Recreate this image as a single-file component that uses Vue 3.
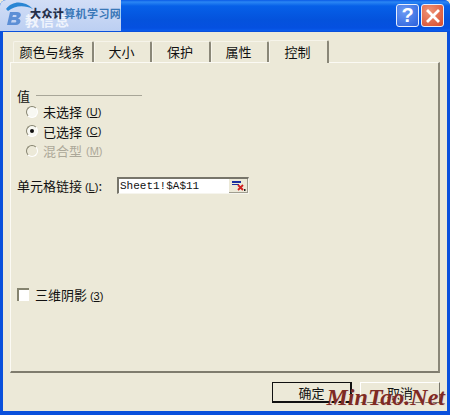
<script setup>
const tabs = [
  { label: '颜色与线条', width: 81 },
  { label: '大小', width: 58 },
  { label: '保护', width: 59 },
  { label: '属性', width: 58 },
  { label: '控制', width: 60, active: true }
];

const options = [
  { label: '未选择', key: 'U' },
  { label: '已选择', key: 'C', checked: true },
  { label: '混合型', key: 'M', disabled: true }
];
</script>

<template>
  <div class="window">
    <header class="titlebar">
      <div class="stamp">
        <svg class="stamp-logo" width="32" height="31" viewBox="0 0 32 31">
          <path d="M4 9 C10 1 22 0 31 9 C23 5 13 5 6 11 Z" fill="#2a86d4" />
          <path d="M8 12 L15 12 C20 12 20 17 16 18.500 C20 19 19 25 14 25 L5 25 Z M11 15 L10.400 17 L13.500 17 C15 17 15 15 13.500 15 Z M9.800 20 L9 22.500 L13 22.500 C14.800 22.500 14.800 20 13 20 Z" fill="#5c8fd6" fill-rule="evenodd" />
        </svg>
        <span class="stamp-ghost">教信息</span>
        <span class="stamp-text"><b>大众计</b><i>算机学习网</i></span>
      </div>
      <div class="caption-buttons">
        <button class="cap help">?</button>
        <button class="cap close">
          <svg width="16" height="16" viewBox="0 0 16 16">
            <path d="M3 3 L13 13 M13 3 L3 13" stroke="#fff" stroke-width="2.800" stroke-linecap="square" />
          </svg>
        </button>
      </div>
    </header>

    <div class="body">
      <div class="tabs">
        <div
          v-for="tab in tabs"
          :key="tab.label"
          class="tab"
          :class="{ active: tab.active }"
          :style="{ width: tab.width + 'px' }"
        >{{ tab.label }}</div>
      </div>

      <section class="panel">
        <div class="group-title">
          <span>值</span>
          <span class="rule"></span>
        </div>

        <div class="radios">
          <div v-for="opt in options" :key="opt.key" class="radio-row" :class="{ off: opt.disabled }">
            <span class="radio" :class="{ checked: opt.checked }"></span>
            <span>{{ opt.label }}</span>
            <span class="hot">(<u>{{ opt.key }}</u>)</span>
          </div>
        </div>

        <div class="link-row">
          <span class="link-label">单元格链接 <span class="hot">(<u>L</u>)</span>:</span>
          <div class="ref-field">
            <span class="ref-text">Sheet1!$A$11</span>
            <span class="ref-btn">
              <svg width="16" height="12" viewBox="0 0 16 12">
                <rect x="1" y="1" width="9" height="2" fill="#1a2fa0" />
                <rect x="1" y="4" width="7" height="1" fill="#1a2fa0" />
                <path d="M7 5 L12 10 M12 5 L7 10" stroke="#d02020" stroke-width="1.800" />
                <rect x="13" y="9" width="1.500" height="2" fill="#222" />
              </svg>
            </span>
          </div>
        </div>

        <label class="check-row">
          <span class="check"></span>
          <span>三维阴影 <span class="hot">(<u>3</u>)</span></span>
        </label>
      </section>

      <footer class="actions">
        <button class="btn primary">确定</button>
        <button class="btn">取消</button>
      </footer>
    </div>

    <div class="mark">MinTao.Net</div>
  </div>
</template>

<style>
html, body {
  margin: 0;
  background: #ece9d8;
}
</style>

<style scoped>
.window {
  position: relative;
  width: 450px;
  height: 415px;
  overflow: hidden;
  display: flex;
  flex-direction: column;
  box-sizing: border-box;
  background: #0a50dc;
  border-radius: 6px 6px 0 0;
  font-family: "Noto Sans CJK SC", "Liberation Sans", sans-serif;
  font-size: 13px;
  color: #111;
}

.titlebar {
  position: relative;
  height: 31px;
  flex: none;
  display: flex;
  align-items: center;
  justify-content: flex-end;
  padding-right: 6px;
  background: linear-gradient(#0a5ae6 0, #2a86f4 2px, #0660e8 6px, #0452dc 20px, #0550e0 28px, #0a5cec 31px);
}

.stamp {
  position: absolute;
  left: 0;
  top: 0;
  width: 121px;
  height: 31px;
  background: linear-gradient(#d2def6, #bccff2);
}

.stamp-logo {
  position: absolute;
  left: 2px;
  top: 0;
}

.stamp-ghost {
  position: absolute;
  left: 25px;
  top: 10px;
  font-size: 14px;
  font-weight: 700;
  letter-spacing: 1px;
  color: #f0f4fc;
}

.stamp-text {
  position: absolute;
  left: 30px;
  top: 4px;
  font-size: 11px;
  font-weight: 700;
  letter-spacing: 0.400px;
  line-height: 18px;
  white-space: nowrap;
}

.stamp-text b {
  color: #26304a;
}

.stamp-text i {
  font-style: normal;
  color: #3a78b8;
}

.caption-buttons {
  display: flex;
  gap: 2px;
}

.cap {
  width: 23px;
  height: 23px;
  padding: 0;
  display: flex;
  align-items: center;
  justify-content: center;
  border: 1px solid #e8eefc;
  border-radius: 3px;
  color: #fff;
  font-family: "Liberation Sans", sans-serif;
  font-size: 20px;
  font-weight: 700;
}

.help {
  background: radial-gradient(circle at 35% 30%, #6c9cf4, #2a5fdc);
}

.close {
  background: radial-gradient(circle at 35% 30%, #ee9478, #d8492a);
}

.body {
  flex: 1;
  margin: 1px 3px 4px 3px;
  padding: 8px 7px 0 7px;
  display: flex;
  flex-direction: column;
  background: #ece9d8;
}

.tabs {
  height: 22px;
  display: flex;
  align-items: flex-end;
  padding-left: 3px;
  position: relative;
  z-index: 1;
}

.tab {
  box-sizing: border-box;
  height: 21px;
  padding: 0 2px 1px 0;
  display: flex;
  align-items: center;
  justify-content: center;
  border-top: 1px solid #f6f4ea;
  border-left: 1px solid #f6f4ea;
  border-right: 2px solid #8a8778;
  border-radius: 2px 2px 0 0;
}

.tab.active {
  height: 23px;
  margin-bottom: -1px;
  background: #ece9d8;
}

.panel {
  box-sizing: border-box;
  height: 311px;
  padding: 23px 0 0 6px;
  display: flex;
  flex-direction: column;
  border-top: 1px solid #fbfaf4;
  border-left: 1px solid #fbfaf4;
  border-right: 2px solid #8a8778;
  border-bottom: 2px solid #7f7c6e;
}

.group-title {
  height: 18px;
  display: flex;
  align-items: center;
  gap: 6px;
}

.rule {
  width: 106px;
  height: 1px;
  background: #a8a698;
}

.radios {
  margin-top: -2px;
  display: flex;
  flex-direction: column;
  gap: 0.500px;
  padding-left: 9px;
}

.radio-row {
  height: 19px;
  display: flex;
  align-items: center;
  gap: 4px;
}

.radio-row.off {
  color: #aca899;
}

.radio {
  box-sizing: border-box;
  width: 12px;
  height: 12px;
  margin-right: 1px;
  display: flex;
  align-items: center;
  justify-content: center;
  border-radius: 50%;
  background: #f8f8f2;
  border: 1px solid;
  border-color: #85836f #fff #fff #85836f;
}

.radio.checked::after {
  content: "";
  width: 4px;
  height: 4px;
  border-radius: 50%;
  background: #111;
}

.off .radio {
  background: #ece9d8;
}

.hot {
  font-size: 11px;
  font-family: "Liberation Sans", sans-serif;
}

.link-row {
  margin-top: 17px;
  height: 17px;
  display: flex;
  align-items: center;
}

.link-label {
  width: 100px;
  white-space: nowrap;
}

.ref-field {
  box-sizing: border-box;
  width: 132px;
  height: 17px;
  display: flex;
  align-items: center;
  justify-content: space-between;
  background: #fff;
  border-top: 2px solid #77756a;
  border-left: 2px solid #77756a;
  border-bottom: 1px solid #f6f5ee;
  border-right: 1px solid #f6f5ee;
}

.ref-text {
  padding-left: 1px;
  font-family: "Liberation Mono", monospace;
  font-size: 11px;
  line-height: 14px;
}

.ref-btn {
  width: 19px;
  height: 14px;
  display: flex;
  align-items: center;
  justify-content: center;
  background: #ece9d8;
  box-shadow: inset -1px -1px 0 #a09e90;
}

.check-row {
  margin-top: 93px;
  height: 14px;
  display: flex;
  align-items: center;
  gap: 6px;
}

.check {
  box-sizing: border-box;
  width: 12px;
  height: 13px;
  background: #fff;
  border-top: 2px solid #85836f;
  border-left: 2px solid #85836f;
}

.actions {
  margin-top: 9px;
  display: flex;
  justify-content: flex-end;
  gap: 8px;
}

.btn {
  box-sizing: border-box;
  width: 80px;
  height: 21px;
  padding: 0;
  font: inherit;
  color: inherit;
  background: #ece9d8;
  border: 1px solid;
  border-color: #fff #77756a #77756a #fff;
}

.btn.primary {
  border: 1px solid #111;
  border-right-width: 2px;
  border-bottom-width: 2px;
}

.mark {
  position: absolute;
  right: 5px;
  bottom: 3px;
  font-family: "Liberation Serif", serif;
  font-size: 24px;
  font-style: italic;
  font-weight: 700;
  line-height: 30px;
  letter-spacing: 0;
  color: #7f2a24;
  text-shadow: 1px 1px 0 #eadfd0;
}
</style>
